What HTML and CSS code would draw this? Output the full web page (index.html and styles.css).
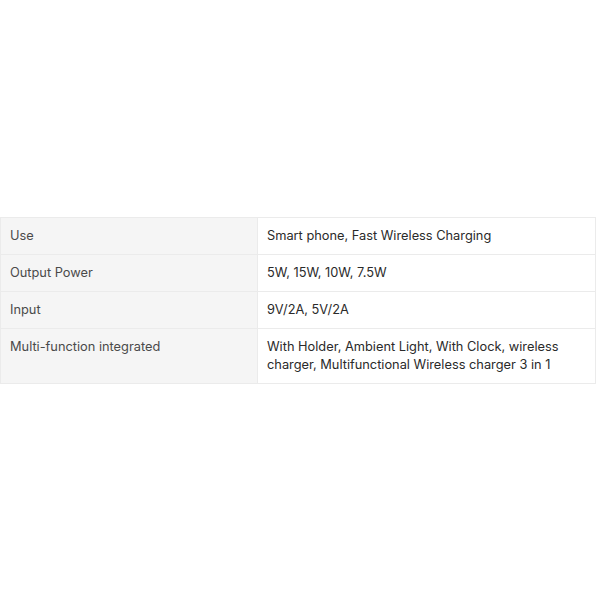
FILE: index.html
```html
<!DOCTYPE html>
<html>
<head>
<meta charset="utf-8">
<link rel="stylesheet" href="styles.css">
</head>
<body>
<div class="page">
  <table class="spec">
    <tr><td class="label">Use</td><td class="value">Smart phone, Fast Wireless Charging</td></tr>
    <tr><td class="label">Output Power</td><td class="value">5W, 15W, 10W, 7.5W</td></tr>
    <tr><td class="label">Input</td><td class="value">9V/2A, 5V/2A</td></tr>
    <tr><td class="label">Multi-function integrated</td><td class="value">With Holder, Ambient Light, With Clock, wireless charger, Multifunctional Wireless charger 3 in 1</td></tr>
  </table>
</div>
</body>
</html>
```
FILE: styles.css
```css
html, body { margin: 0; padding: 0; background: #fff; }
.page {
  min-height: 600px;
  display: flex;
  align-items: center;
}
.spec {
  width: 596px;
  border-collapse: collapse;
  font-family: Inter, "Noto Sans", sans-serif;
  font-size: 12.8px;
  line-height: 18px;
}
.spec td {
  border: 1px solid #ebebeb;
  padding: 9px 10px 9px 9px;
  vertical-align: top;
}
.label {
  width: 237px;
  background: #f5f5f5;
  color: #4a4a4a;
}
.value {
  color: #2a2a2a;
}
```
